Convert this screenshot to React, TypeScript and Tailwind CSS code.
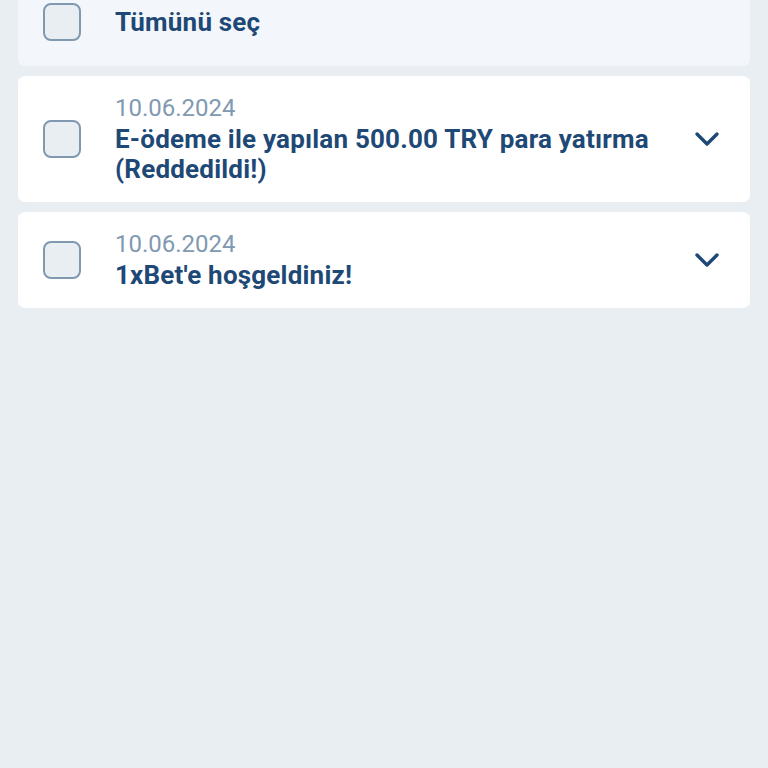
const items = [
  { date: "10.06.2024", title: "E-ödeme ile yapılan 500.00 TRY para yatırma (Reddedildi!)" },
  { date: "10.06.2024", title: "1xBet'e hoşgeldiniz!" },
]

function Checkbox() {
  return (
    <div className="w-[38px] h-[38px] shrink-0 rounded-[8px] border-2 border-[#8098b0] bg-[#e9eef3]" />
  )
}

function Chevron() {
  return (
    <svg width="26" height="16" viewBox="0 0 26 16" fill="none" className="shrink-0">
      <path
        d="M3 3l10 10 10-10"
        stroke="#1e4976"
        strokeWidth="3.4"
        strokeLinecap="round"
        strokeLinejoin="round"
      />
    </svg>
  )
}

export default function App() {
  return (
    <main
      className="min-h-[768px] bg-[#e9eef3] px-[18px] overflow-hidden"
      style={{ fontFamily: "Roboto, 'Noto Sans', sans-serif" }}
    >
      <div className="flex flex-col gap-[10px] -mt-[22px]">
        <div className="flex items-center bg-[#f3f7fb] rounded-[7px] pl-[25px] pr-[30px] h-[88px]">
          <Checkbox />
          <span className="ml-[34px] text-[26px] leading-[30px] tracking-[0.2px] font-bold text-[#1e4976]">
            Tümünü seç
          </span>
        </div>
        {items.map((item, i) => (
          <div
            key={i}
            className="flex items-center bg-white rounded-[7px] pl-[25px] pr-[30px] py-[18px]"
          >
            <Checkbox />
            <div className="ml-[34px] flex-1 min-w-0 pr-[30px]">
              <div className="text-[24px] leading-[30px] -mt-[1px] mb-[1px] text-[#8199b3]">{item.date}</div>
              <div className="text-[26px] leading-[30px] tracking-[0.2px] font-bold text-[#1e4976]">
                {item.title}
              </div>
            </div>
            <Chevron />
          </div>
        ))}
      </div>
    </main>
  )
}
